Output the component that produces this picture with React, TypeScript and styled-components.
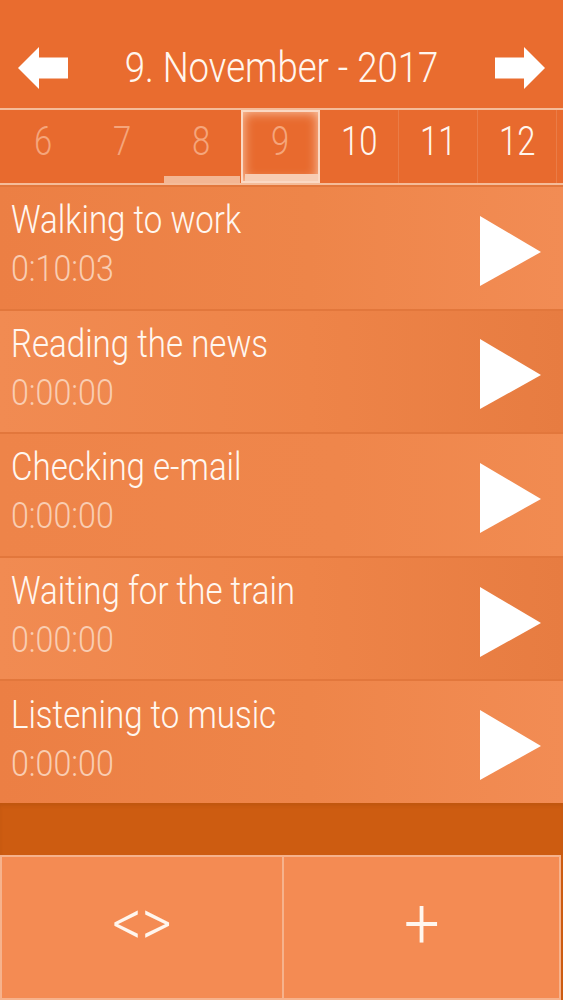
import React from 'react';
import styled, { createGlobalStyle } from 'styled-components';

const GlobalStyle = createGlobalStyle`
  html, body {
    margin: 0;
    padding: 0;
    background: #e96c2f;
  }
  body {
    font-family: Roboto, 'Noto Sans', sans-serif;
    font-weight: 300;
    color: #fff;
  }
`;

interface Activity {
  title: string;
  time: string;
  shade: 'rise' | 'fall' | 'flat';
}

const activities: Activity[] = [
  { title: 'Walking to work', time: '0:10:03', shade: 'rise' },
  { title: 'Reading the news', time: '0:00:00', shade: 'fall' },
  { title: 'Checking e-mail', time: '0:00:00', shade: 'flat' },
  { title: 'Waiting for the train', time: '0:00:00', shade: 'fall' },
  { title: 'Listening to music', time: '0:00:00', shade: 'rise' },
];

const days = [6, 7, 8, 9, 10, 11, 12];
const selectedDay = 9;
const loggedDays = [8, 9];

const shades = {
  rise: 'linear-gradient(90deg, #ec7f44 0%, #ee8549 55%, #f28c54 100%)',
  fall: 'linear-gradient(90deg, #f18b52 0%, #ee8448 55%, #e77c41 100%)',
  flat: 'linear-gradient(90deg, #ee8449 0%, #ef864b 60%, #f18b51 100%)',
};

const Screen = styled.div`
  width: 563px;
  height: 1000px;
  display: flex;
  flex-direction: column;
  overflow: hidden;
  background: #e96c2f;
`;

const Header = styled.header`
  height: 108px;
  display: flex;
  align-items: center;
  justify-content: space-between;
  padding: 0 18px;
  box-sizing: border-box;
  background: #e96c2f;
`;

const ArrowButton = styled.button`
  width: 50px;
  height: 44px;
  padding: 0;
  margin-top: 28px;
  border: none;
  background: none;
  display: flex;
  align-items: center;
  justify-content: center;
`;

const Title = styled.h1`
  margin: 28px 0 0;
  flex: 1;
  text-align: center;
  font-size: 42px;
  font-weight: 300;
  line-height: 1;
  color: #fff6ee;
  transform: scaleX(0.87);
`;

const DayStrip = styled.nav`
  height: 77px;
  display: flex;
  padding-left: 4px;
  border-top: 2px solid #f5bc99;
  border-bottom: 2px solid #f5bc99;
  background: #e86a2e;
  box-sizing: border-box;
`;

const DayCell = styled.div<{ $past: boolean; $selected: boolean }>`
  position: relative;
  width: 79px;
  flex: none;
  display: flex;
  align-items: center;
  justify-content: center;
  box-sizing: border-box;
  font-size: 40px;
  font-weight: 300;
  color: ${({ $past, $selected }) => ($past || $selected ? '#f5a57b' : '#fff6ee')};
  border-right: 1px solid ${({ $past }) => ($past ? 'transparent' : 'rgba(255,255,255,0.12)')};
  ${({ $selected }) =>
    $selected &&
    `
    border: 2px solid #fbd9c4;
    box-shadow: inset 0 0 12px rgba(255, 230, 210, 0.8);
  `}
`;

const DayNumber = styled.span`
  display: inline-block;
  transform: scaleX(0.82);
  margin-bottom: 10px;
`;

const LogBar = styled.span<{ $bright: boolean }>`
  position: absolute;
  left: 2px;
  right: 0;
  bottom: 0;
  height: 7px;
  background: ${({ $bright }) => ($bright ? '#f7cdb4' : '#f3b693')};
`;

const List = styled.ul`
  list-style: none;
  margin: 0;
  padding: 0;
  display: flex;
  flex-direction: column;
`;

const Row = styled.li<{ $shade: Activity['shade'] }>`
  height: 123.6px;
  box-sizing: border-box;
  display: flex;
  align-items: center;
  justify-content: space-between;
  padding: 0 22px 0 11px;
  background: ${({ $shade }) => shades[$shade]};
  border-top: 2px solid #e2773c;
`;

const RowText = styled.div`
  display: flex;
  flex-direction: column;
  transform: scaleX(0.87);
  transform-origin: left center;
  white-space: nowrap;
`;

const ActivityTitle = styled.span`
  font-size: 38px;
  line-height: 46px;
  color: #fff7f0;
  margin-top: -6px;
`;

const ActivityTime = styled.span`
  font-size: 37px;
  line-height: 46px;
  color: #f9cdb2;
  margin-top: 3px;
`;

const PlayButton = styled.button`
  width: 61px;
  height: 70px;
  padding: 0;
  margin-top: 6px;
  border: none;
  background: none;
  display: flex;
`;

const Band = styled.div`
  height: 52px;
  flex: none;
  background: #cd5c11;
  box-shadow: inset 0 3px 3px rgba(160, 70, 10, 0.25);
`;

const Footer = styled.footer`
  flex: 1;
  display: grid;
  grid-template-columns: 284px 277px;
  background: #cd5c11;
`;

const FooterButton = styled.button<{ $last?: boolean }>`
  border: 2px solid #f6b28c;
  border-left-width: ${({ $last }) => ($last ? '0' : '2px')};
  background: #f48b53;
  color: #fff6ee;
  font-family: Roboto, sans-serif;
  font-weight: 300;
  display: flex;
  align-items: center;
  justify-content: center;
  padding: 0;
`;

const FooterGlyph = styled.span<{ $size: number }>`
  display: inline-block;
  font-size: ${({ $size }) => $size}px;
  line-height: 1;
  margin-bottom: 6px;
  transform: scaleX(0.9);
`;

const LeftArrow = () => (
  <svg width="50" height="44" viewBox="0 0 50 44">
    <polygon points="0,22 21,1 21,11.5 50,11.5 50,32.5 21,32.5 21,43" fill="#fff" />
  </svg>
);

const RightArrow = () => (
  <svg width="50" height="44" viewBox="0 0 50 44">
    <polygon points="50,22 29,1 29,11.5 0,11.5 0,32.5 29,32.5 29,43" fill="#fff" />
  </svg>
);

const PlayIcon = () => (
  <svg width="61" height="70" viewBox="0 0 61 70">
    <polygon points="0,0 61,36 0,70" fill="#fff" />
  </svg>
);

const App: React.FC = () => (
  <>
    <GlobalStyle />
    <Screen>
      <Header>
        <ArrowButton aria-label="Previous day">
          <LeftArrow />
        </ArrowButton>
        <Title>9. November - 2017</Title>
        <ArrowButton aria-label="Next day">
          <RightArrow />
        </ArrowButton>
      </Header>

      <DayStrip>
        {days.map(day => (
          <DayCell key={day} $past={day < selectedDay} $selected={day === selectedDay}>
            <DayNumber>{day}</DayNumber>
            {loggedDays.includes(day) && <LogBar $bright={day === selectedDay} />}
          </DayCell>
        ))}
      </DayStrip>

      <List>
        {activities.map(activity => (
          <Row key={activity.title} $shade={activity.shade}>
            <RowText>
              <ActivityTitle>{activity.title}</ActivityTitle>
              <ActivityTime>{activity.time}</ActivityTime>
            </RowText>
            <PlayButton aria-label={`Start ${activity.title}`}>
              <PlayIcon />
            </PlayButton>
          </Row>
        ))}
      </List>

      <Band />

      <Footer>
        <FooterButton>
          <FooterGlyph $size={64}>&lt;&gt;</FooterGlyph>
        </FooterButton>
        <FooterButton $last>
          <FooterGlyph $size={70}>+</FooterGlyph>
        </FooterButton>
      </Footer>
    </Screen>
  </>
);

export default App;
